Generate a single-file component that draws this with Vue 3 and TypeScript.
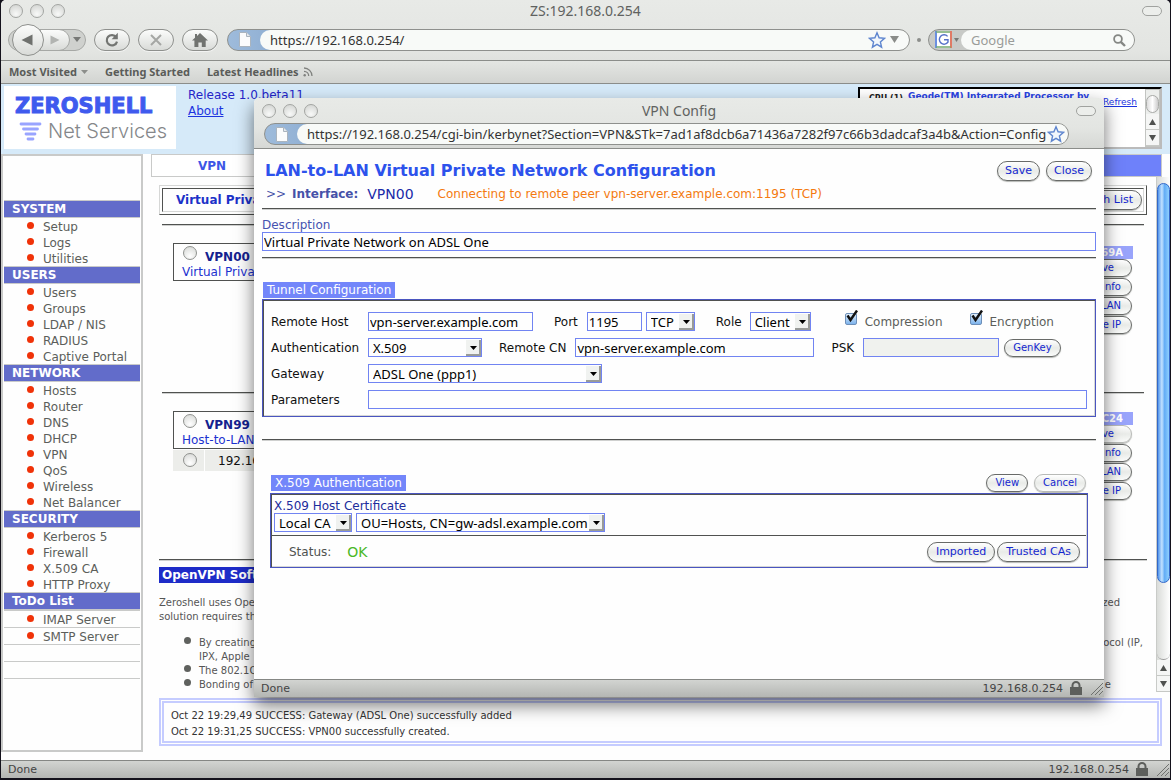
<script setup lang="ts">
import { ref } from 'vue'

interface MenuGroup {
  title: string
  items: string[]
}

const groups: MenuGroup[] = [
  { title: 'SYSTEM', items: ['Setup', 'Logs', 'Utilities'] },
  { title: 'USERS', items: ['Users', 'Groups', 'LDAP / NIS', 'RADIUS', 'Captive Portal'] },
  { title: 'NETWORK', items: ['Hosts', 'Router', 'DNS', 'DHCP', 'VPN', 'QoS', 'Wireless', 'Net Balancer'] },
  { title: 'SECURITY', items: ['Kerberos 5', 'Firewall', 'X.509 CA', 'HTTP Proxy'] },
]
const todo: string[] = ['IMAP Server', 'SMTP Server', '', '']

interface Vpn {
  name: string
  label: string
  code: string
  actions: string[]
  dimFirst: boolean
  client: string
}

const vpns: Vpn[] = [
  { name: 'VPN00', label: 'Virtual Private', code: '69A', actions: ['ve', 'nfo', 'LAN', 'e IP'], dimFirst: false, client: '' },
  { name: 'VPN99', label: 'Host-to-LAN', code: 'C24', actions: ['ve', 'nfo', 'LAN', 'e IP'], dimFirst: true, client: '192.168' },
]

const logLines: string[] = [
  'Oct 22 19:29,49 SUCCESS: Gateway (ADSL One) successfully added',
  'Oct 22 19:31,25 SUCCESS: VPN00 successfully created.',
]

const mainUrl = ref('https://192.168.0.254/')
const popupUrl = ref(
  'https://192.168.0.254/cgi-bin/kerbynet?Section=VPN&STk=7ad1af8dcb6a71436a7282f97c66b3dadcaf3a4b&Action=Config',
)
const description = ref('Virtual Private Network on ADSL One')
const remoteHost = ref('vpn-server.example.com')
const port = ref('1195')
const remoteCn = ref('vpn-server.example.com')
const parameters = ref('')
const psk = ref('')
const compression = ref(true)
const encryption = ref(true)
</script>

<template>
  <div class="desktop">
    <div class="window">
      <header class="chrome">
        <div class="titlebar">
          <div class="lights"><i></i><i></i><i></i></div>
          <span class="title">ZS:192.168.0.254</span>
          <i class="pill"></i>
        </div>
        <div class="toolbar">
          <div class="navpair">
            <button class="back" aria-label="Back">
              <svg width="12" height="12" viewBox="0 0 12 12"><path d="M11.5 0.5v11L0.5 6z" fill="#6f716e" /></svg>
            </button>
            <button class="fwd" aria-label="Forward">
              <svg width="10" height="10" viewBox="0 0 10 10"><path d="M0.5 0.5v9L9.5 5z" fill="#b2b4b1" /></svg>
            </button>
            <button class="hist" aria-label="History">
              <svg width="8" height="5" viewBox="0 0 8 5"><path d="M0 0h8L4 5z" fill="#777976" /></svg>
            </button>
          </div>
          <button class="tool" aria-label="Reload">
            <svg width="16" height="16" viewBox="0 0 16 16">
              <path d="M12.2 5.2A5.2 5.2 0 1 0 13 9.6" fill="none" stroke="#737572" stroke-width="2.2" />
              <path d="M13.8 0.8v6.4H7.6z" fill="#737572" />
            </svg>
          </button>
          <button class="tool" aria-label="Stop">
            <svg width="14" height="14" viewBox="0 0 14 14"><path d="M2 2l10 10M12 2L2 12" stroke="#a5a7a4" stroke-width="2" /></svg>
          </button>
          <button class="tool" aria-label="Home">
            <svg width="16" height="14" viewBox="0 0 16 14">
              <path d="M8 0l8 7.6h-2.3V14H9.8V9.5H6.4V14H2.4V7.6H0L3 4.7V1h2v1.9z" fill="#717370" />
            </svg>
          </button>
          <div class="address main-address">
            <span class="favicon">
              <svg width="12" height="15" viewBox="0 0 12 15">
                <path d="M0.5 0.5h7l4 4v10h-11z" fill="#fbfcfd" stroke="#aab4be" />
                <path d="M7.5 0.5v4h4" fill="#e2e8ee" stroke="#aab4be" />
              </svg>
            </span>
            <input v-model="mainUrl" aria-label="Address" />
            <svg class="star" width="18" height="17" viewBox="0 0 18 17">
              <path d="M9 1.3l2.1 5 5.4.5-4.1 3.6 1.2 5.3L9 12.9l-4.6 2.8 1.2-5.3L1.5 6.8l5.4-.5z" fill="#f2f7fc" stroke="#5f86cf" stroke-width="1.4" />
            </svg>
            <svg class="drop" width="9" height="7" viewBox="0 0 9 7"><path d="M0 0h9L4.5 7z" fill="#8a8c89" /></svg>
          </div>
          <i class="splitter"></i>
          <div class="search">
            <span class="engine">
              <svg width="17" height="17" viewBox="0 0 17 17">
                <path d="M1 0v17" stroke="#6b8fe0" stroke-width="2" /><path d="M1 1h15" stroke="#68b35e" />
                <path d="M16 0v17" stroke="#e07a66" stroke-width="2" /><path d="M1 16h15" stroke="#68b35e" />
                <rect x="2" y="2" width="13" height="13" fill="#fff" />
                <path d="M12.6 5.4A4.7 4.7 0 1 0 13 11V8.8H9" fill="none" stroke="#5570c8" stroke-width="1.4" />
              </svg>
              <svg width="5" height="4" viewBox="0 0 5 4"><path d="M0 0h5L2.5 4z" fill="#777976" /></svg>
            </span>
            <input placeholder="Google" aria-label="Search" />
            <svg class="glass" width="13" height="13" viewBox="0 0 13 13">
              <circle cx="5" cy="5" r="3.9" fill="none" stroke="#858784" stroke-width="1.8" />
              <path d="M7.8 7.8L12 12" stroke="#858784" stroke-width="2.4" />
            </svg>
          </div>
        </div>
        <nav class="bookmarks">
          <a href="#">Most Visited
            <svg width="7" height="5" viewBox="0 0 7 5"><path d="M0 0h7L3.5 4z" fill="#8c8e8b" /></svg>
          </a>
          <a href="#">Getting Started</a>
          <a href="#">Latest Headlines
            <svg width="10" height="10" viewBox="0 0 10 10">
              <g fill="none" stroke="#7f817e" stroke-width="1.3"><path d="M1 1a8 8 0 0 1 8 8" /><path d="M1 4.3a4.7 4.7 0 0 1 4.7 4.7" /></g>
              <circle cx="1.7" cy="8.3" r="1.2" fill="#7f817e" />
            </svg>
          </a>
        </nav>
      </header>

      <section class="banner">
        <div class="logo">
          <strong>ZEROSHELL</strong>
          <div class="logo-sub">
            <svg width="23" height="20" viewBox="0 0 23 20">
              <g stroke="#99a4ff" stroke-width="2.8" stroke-linecap="round"><path d="M2 3h19M4.5 8h14M7 13h9M9 18h5" /></g>
            </svg>
            <span>Net Services</span>
          </div>
        </div>
        <div class="release">
          <span>Release 1.0.beta11</span>
          <a href="#">About</a>
        </div>
        <div class="sysinfo">
          <b class="cpu">CPU (1)</b>
          <b class="model">Geode(TM) Integrated Processor by</b>
          <a href="#">Refresh</a>
          <div class="miniscroll">
            <i class="nub"></i>
            <button aria-label="Up"><svg width="7" height="6" viewBox="0 0 7 6"><path d="M3.5 0L7 6H0z" fill="#4f514f" /></svg></button>
            <button aria-label="Down"><svg width="7" height="6" viewBox="0 0 7 6"><path d="M0 0h7L3.5 6z" fill="#4f514f" /></svg></button>
          </div>
        </div>
      </section>

      <div class="body">
        <nav class="sidebar">
          <div class="spacer"></div>
          <template v-for="g in groups" :key="g.title">
            <h2>{{ g.title }}</h2>
            <ul>
              <li v-for="i in g.items" :key="i"><a href="#">{{ i }}</a></li>
            </ul>
          </template>
          <h2>ToDo List</h2>
          <ul class="ruled">
            <li v-for="(t, n) in todo" :key="n" :class="{ blank: !t }"><a v-if="t" href="#">{{ t }}</a></li>
          </ul>
        </nav>

        <main class="main">
          <div class="tabs"><a href="#">VPN</a></div>
          <div class="scroller">
            <div class="frame">
              <div class="listhead">
                <div>
                  <b>Virtual Priva</b>
                  <button class="btn tall">h List</button>
                </div>
              </div>
              <template v-for="v in vpns" :key="v.name">
                <hr class="inner" />
                <section class="vpn">
                  <div class="vpn-left">
                    <div class="vpn-card">
                      <label><input type="radio" name="vpn" /><b>{{ v.name }}</b></label>
                      <span>{{ v.label }}</span>
                    </div>
                    <div v-if="v.client" class="client">
                      <span><input type="radio" name="vpn" :aria-label="v.client" /></span><span>{{ v.client }}</span>
                    </div>
                  </div>
                  <div class="vpn-right">
                    <b>{{ v.code }}</b>
                    <button v-for="(a, n) in v.actions" :key="a" class="btn" :class="{ dim: v.dimFirst && n === 0, short: n === 0 }">{{ a }}</button>
                  </div>
                </section>
              </template>
              <hr />
              <h3>OpenVPN Soft</h3>
              <div class="prose">
                <p class="ends"><span>Zeroshell uses Open</span><span class="r1">zed</span></p>
                <p>solution requires the</p>
                <ul>
                  <li><span class="ends"><span>By creating</span><span class="r0">ocol (IP,</span></span>IPX, Apple</li>
                  <li>The 802.1Q</li>
                  <li><span class="ends"><span>Bonding of</span><span class="r2">e</span></span></li>
                </ul>
              </div>
            </div>
            <div class="scrollbar">
              <div class="track"><div class="thumb"></div></div>
              <button aria-label="Scroll up"><svg width="7" height="6" viewBox="0 0 7 6"><path d="M3.5 0L7 6H0z" fill="#4f514f" /></svg></button>
              <button aria-label="Scroll down"><svg width="7" height="6" viewBox="0 0 7 6"><path d="M0 0h7L3.5 6z" fill="#4f514f" /></svg></button>
            </div>
          </div>
          <div class="log"><div v-for="l in logLines" :key="l">{{ l }}</div></div>
        </main>
      </div>

      <footer class="status">
        <span>Done</span>
        <span class="host">192.168.0.254</span>
        <svg class="lock" width="12" height="14" viewBox="0 0 12 14">
          <rect y="6" width="12" height="8" fill="#5d5f5c" /><path d="M2.5 6.5V4.5a3.5 3.5 0 0 1 7 0v2" fill="none" stroke="#5d5f5c" stroke-width="2" />
        </svg>
        <svg class="grip" width="12" height="12" viewBox="0 0 12 12"><path d="M0 12L12 0M4 12l8-8M8 12l4-4" stroke="#6f716e" /></svg>
      </footer>
    </div>

    <div class="popup" role="dialog" aria-label="VPN Config">
      <header class="chrome">
        <div class="titlebar">
          <div class="lights"><i></i><i></i><i></i></div>
          <span class="title">VPN Config</span>
          <i class="pill"></i>
        </div>
        <div class="address">
          <span class="favicon">
            <svg width="12" height="15" viewBox="0 0 12 15">
              <path d="M0.5 0.5h7l4 4v10h-11z" fill="#fbfcfd" stroke="#aab4be" />
              <path d="M7.5 0.5v4h4" fill="#e2e8ee" stroke="#aab4be" />
            </svg>
          </span>
          <input v-model="popupUrl" aria-label="Popup address" />
          <svg class="star" width="18" height="17" viewBox="0 0 18 17">
            <path d="M9 1.3l2.1 5 5.4.5-4.1 3.6 1.2 5.3L9 12.9l-4.6 2.8 1.2-5.3L1.5 6.8l5.4-.5z" fill="#f2f7fc" stroke="#5f86cf" stroke-width="1.4" />
          </svg>
        </div>
      </header>

      <form class="config" @submit.prevent>
        <div class="heading">
          <h1>LAN-to-LAN Virtual Private Network Configuration</h1>
          <button class="btn tall">Save</button>
          <button class="btn tall">Close</button>
        </div>
        <div class="iface">
          <span>&gt;&gt;</span><b>Interface:</b><em>VPN00</em>
          <span class="state">Connecting to remote peer vpn-server.example.com:1195 (TCP)</span>
        </div>
        <hr />
        <div class="desc">
          <label for="desc">Description</label>
          <input id="desc" v-model="description" />
        </div>
        <hr />

        <h2 class="badge">Tunnel Configuration</h2>
        <div class="panel tunnel">
          <div class="row">
            <label for="rhost">Remote Host</label>
            <input id="rhost" v-model="remoteHost" class="w-host" />
            <label for="port" class="l-port">Port</label>
            <input id="port" v-model="port" class="w-port" />
            <span class="sel w-proto"><select aria-label="Protocol"><option>TCP</option></select>
              <i><svg width="7" height="4" viewBox="0 0 7 4"><path d="M0 0h7L3.5 4z" /></svg></i></span>
            <label for="role" class="l-role">Role</label>
            <span class="sel w-role"><select id="role"><option>Client</option></select>
              <i><svg width="7" height="4" viewBox="0 0 7 4"><path d="M0 0h7L3.5 4z" /></svg></i></span>
            <label class="check first"><span><input v-model="compression" type="checkbox" />
              <svg v-if="compression" width="13" height="13" viewBox="0 0 13 13"><path d="M2.5 5.5l3 4.5L12 0.5" fill="none" stroke="#111" stroke-width="2.4" /></svg></span>Compression</label>
            <label class="check"><span><input v-model="encryption" type="checkbox" />
              <svg v-if="encryption" width="13" height="13" viewBox="0 0 13 13"><path d="M2.5 5.5l3 4.5L12 0.5" fill="none" stroke="#111" stroke-width="2.4" /></svg></span>Encryption</label>
          </div>
          <div class="row">
            <label for="auth">Authentication</label>
            <span class="sel w-auth"><select id="auth"><option>X.509</option></select>
              <i><svg width="7" height="4" viewBox="0 0 7 4"><path d="M0 0h7L3.5 4z" /></svg></i></span>
            <label for="rcn" class="l-cn">Remote CN</label>
            <input id="rcn" v-model="remoteCn" class="w-cn" />
            <label for="psk" class="l-psk">PSK</label>
            <input id="psk" v-model="psk" class="w-psk" disabled />
            <button class="btn genkey">GenKey</button>
          </div>
          <div class="row">
            <label for="gw">Gateway</label>
            <span class="sel w-gw"><select id="gw"><option>ADSL One (ppp1)</option></select>
              <i><svg width="7" height="4" viewBox="0 0 7 4"><path d="M0 0h7L3.5 4z" /></svg></i></span>
          </div>
          <div class="row">
            <label for="params">Parameters</label>
            <input id="params" v-model="parameters" class="grow" />
          </div>
        </div>
        <hr class="after-tunnel" />

        <div class="x509">
          <div class="x509-head">
            <h2 class="badge">X.509 Authentication</h2>
            <button class="btn">View</button>
            <button class="btn dim">Cancel</button>
          </div>
          <div class="panel">
            <div class="cert">
              <label for="cert">X.509 Host Certificate</label>
              <div class="cert-row">
                <span class="sel w-ca"><select aria-label="Authority"><option>Local CA</option></select>
                  <i><svg width="7" height="4" viewBox="0 0 7 4"><path d="M0 0h7L3.5 4z" /></svg></i></span>
                <span class="sel w-cert"><select id="cert"><option>OU=Hosts, CN=gw-adsl.example.com</option></select>
                  <i><svg width="7" height="4" viewBox="0 0 7 4"><path d="M0 0h7L3.5 4z" /></svg></i></span>
              </div>
            </div>
            <div class="state-row">
              <span>Status:</span><strong>OK</strong>
              <button class="btn tall">Imported</button>
              <button class="btn tall">Trusted CAs</button>
            </div>
          </div>
        </div>
      </form>

      <footer class="status">
        <span>Done</span>
        <span class="host">192.168.0.254</span>
        <svg class="lock" width="12" height="14" viewBox="0 0 12 14">
          <rect y="6" width="12" height="8" fill="#5d5f5c" /><path d="M2.5 6.5V4.5a3.5 3.5 0 0 1 7 0v2" fill="none" stroke="#5d5f5c" stroke-width="2" />
        </svg>
        <svg class="grip" width="12" height="12" viewBox="0 0 12 12"><path d="M0 12L12 0M4 12l8-8M8 12l4-4" stroke="#6f716e" /></svg>
      </footer>
    </div>
  </div>
</template>

<style>
html, body { background: #000; }
</style>

<style scoped>
* { box-sizing: border-box; }
.desktop {
  position: relative;
  display: flex;
  min-height: 100vh;
  padding: 0 1px 2px;
  overflow: hidden;
  background: #14121c;
  font: 12px/16px "DejaVu Sans", Verdana, sans-serif;
  color: #222;
}
button, input, select { font: inherit; margin: 0; }
input, select { font: 13px/16px "Noto Sans", "Lucida Grande", sans-serif; }
h1, h2, h3, ul, p { margin: 0; padding: 0; }
svg { display: block; flex: none; }
.window {
  flex: 1;
  min-width: 0;
  display: flex;
  flex-direction: column;
  background: #fefefe;
  border-radius: 5px 5px 0 0;
  overflow: hidden;
}

/* browser chrome */
.chrome { background: linear-gradient(#e8eae7, #e3e5e2 60%, #d6d8d5); }
.titlebar { display: grid; grid-template-columns: 1fr auto 1fr; align-items: center; height: 22px; padding: 0 8px; }
.lights { display: flex; gap: 7px; }
.lights i {
  width: 14px;
  height: 14px;
  border: 1px solid #a3a5a2;
  border-radius: 50%;
  background: radial-gradient(circle at 50% 75%, #f8f9f8, #cfd1ce);
}
.title { color: #606260; font: 14px/16px "Noto Sans", "Lucida Grande", sans-serif; }
.pill {
  justify-self: end;
  width: 20px;
  height: 10px;
  border: 1px solid #a0a29f;
  border-radius: 5px;
  background: #eceeeb;
}
.toolbar {
  display: flex;
  align-items: center;
  height: 39px;
  padding: 0 35px 3px 7px;
  border-bottom: 1px solid #8b8d8a;
}
.toolbar button {
  display: flex;
  align-items: center;
  justify-content: center;
  padding: 0;
  border: 1px solid #8e908d;
  background: linear-gradient(#fbfcfb, #d9dbd8);
}
.navpair {
  display: flex;
  align-items: center;
  width: 78px;
  height: 22px;
  border: 1px solid #a6a8a5;
  border-radius: 11px;
  background: #cfd1ce;
}
.toolbar .back { width: 32px; height: 32px; margin-left: 3px; padding-right: 3px; border-radius: 50%; z-index: 1; flex: none; }
.toolbar .fwd { width: 30px; height: 22px; margin-left: -4px; border-radius: 0 11px 11px 0; flex: none; border-color: #a6a8a5; }
.toolbar .hist { width: 14px; border: 0; background: none; }
.toolbar .tool { width: 36px; height: 22px; margin-left: 8px; border-radius: 11px; box-shadow: 0 1px 0 #f2f3f2; }
.address {
  display: flex;
  align-items: center;
  height: 22px;
  border: 1px solid #8e908d;
  border-radius: 11px;
  overflow: hidden;
  background: linear-gradient(90deg, #9ebbdb, #8babd0 60px, #f8faf8 70px);
}
.favicon { width: 32px; padding: 0 0 0 11px; flex: none; }
.address input {
  flex: 1;
  min-width: 0;
  height: 20px;
  padding: 0 0 0 10px;
  border: 0;
  border-radius: 10px 0 0 10px;
  background: #f8faf8;
  color: #333;
  outline: none;
}
.star { background: #f8faf8; height: 20px; padding: 1px 0; }
.main-address { flex: 1; margin-left: 9px; }
.drop { margin: 0 10px 0 4px; }
.splitter { width: 4px; height: 4px; margin: 0 7px; border-radius: 2px; background: #8c8e8b; }
.search {
  display: flex;
  align-items: center;
  width: 207px;
  height: 22px;
  border: 1px solid #8e908d;
  border-radius: 11px;
  overflow: hidden;
  background: #c8cac7;
}
.engine { display: flex; align-items: center; gap: 2px; width: 32px; padding-left: 6px; flex: none; }
.search input {
  flex: 1;
  min-width: 0;
  height: 20px;
  padding: 0 0 0 10px;
  border: 0;
  border-radius: 10px 0 0 10px;
  background: #f8faf8;
}
.search input::placeholder { color: #9a9c99; }
.glass { height: 20px; width: 28px; padding: 4px 8px 3px 7px; background: #f8faf8; }
.bookmarks {
  display: flex;
  align-items: center;
  gap: 17px;
  height: 23px;
  padding-left: 8px;
  border-bottom: 1px solid #8b8d8a;
  background: linear-gradient(#e4e6e3, #d2d4d1);
  font: bold 11px/16px "Noto Sans", "Lucida Grande", sans-serif;
}
.bookmarks a { display: flex; align-items: center; gap: 4px; color: #5a5c59; text-decoration: none; }

/* banner */
.banner { display: flex; height: 70px; padding: 2px 8px 0 3px; background: #d6eaf9; }
.logo { width: 172px; height: 63px; padding: 8px 0 0 11px; background: #fff; flex: none; }
.logo strong { display: block; font-size: 21px; line-height: 24px; color: #3f5aee; -webkit-text-stroke: 1px #3f5aee; }
.logo-sub { display: flex; align-items: center; gap: 6px; padding-left: 4px; font: 20px/26px Inter, sans-serif; font-weight: 300; color: #85878a; }
.release { display: flex; flex-direction: column; align-items: flex-start; margin-left: 12px; padding-top: 1px; color: #2424c8; }
.release a, .sysinfo a { color: #1c34e0; }
.sysinfo {
  display: flex;
  align-items: flex-start;
  width: 304px;
  height: 62px;
  margin: 1px 0 0 auto;
  padding-left: 9px;
  border: 2px solid;
  border-color: #000 #bbb #bbb #000;
  background: #fff;
  font-size: 10px;
  line-height: 14px;
}
.cpu { width: 39px; font-size: 8px; line-height: 20px; flex: none; }
.model { width: 195px; color: #2b44e4; font-size: 9px; flex: none; white-space: nowrap; }
.sysinfo a { font-size: 9px; padding-top: 6px; }
.miniscroll { display: flex; flex-direction: column; width: 15px; height: 58px; margin-left: auto; background: #eceeec; border: 1px solid #c2c4c1; }
.nub { height: 20px; margin: 5px 0 1px; border-radius: 8px; border: 1px solid #a9aba8; background: linear-gradient(90deg, #ddd, #fff, #ccc); }
.miniscroll button, .scrollbar button { display: flex; align-items: center; justify-content: center; flex: none; width: 100%; height: 16px; padding: 0; border: 0; border-bottom: 1px solid #c6c8c5; background: #f5f6f5; }

/* sidebar */
.body { flex: 1; display: grid; grid-template-columns: 142px minmax(0, 1fr); column-gap: 8px; padding-bottom: 8px; }
.sidebar { border: 2px solid #c9cac9; background: #fefefe; color: #5c5e5b; padding: 0 1px; }
.spacer { height: 44px; }
.sidebar h2 {
  height: 18px;
  padding-left: 8px;
  border: solid #c9cac9;
  border-width: 1px 0;
  background: #626cca;
  color: #fff;
  font-size: 12px;
  line-height: 17px;
}
.sidebar ul { list-style: none; }
.sidebar li { display: flex; align-items: center; height: 16px; padding: 2px 0 0 23px; }
.sidebar li::before { content: ""; width: 7px; height: 7px; margin: -4px 9px 0 0; border-radius: 50%; background: #f03208; }
.sidebar a { color: inherit; text-decoration: none; }
.sidebar .ruled { border-top: 1px solid #c9cac9; }
.sidebar .ruled li { height: 17px; border-bottom: 1px solid #c9cac9; }
.sidebar .blank::before { display: none; }

/* content behind the popup */
.main { display: flex; flex-direction: column; min-width: 0; }
.tabs { display: flex; height: 23px; margin-right: 8px; border: 1px solid #c9cac9; background: #6e81fa; }
.tabs a { width: 120px; background: #fff; color: #3c56e6; font-weight: bold; line-height: 23px; text-align: center; text-decoration: none; }
.scroller { flex: 1; display: flex; }
.frame { flex: 1; min-width: 0; padding: 8px 9px 0 8px; }
hr { height: 2px; margin: 0; border: 0; border-top: 1px solid #505250; border-bottom: 1px solid #cfd0cf; }
.listhead { padding: 2px; height: 30px; border: 1px solid; border-color: #d6d7d6 #505250 #505250 #d6d7d6; }
.listhead > div { display: flex; align-items: center; justify-content: space-between; height: 24px; padding: 0 1px 0 13px; border: 1px solid; border-color: #505250 #d6d7d6 #d6d7d6 #505250; }
.listhead b { color: #1c32c8; }
hr.inner { margin: 0 3px; }
.listhead + hr { margin-top: 9px; }
.vpn { display: flex; justify-content: space-between; height: 166px; padding: 17px 14px 0; }
.vpn:last-of-type { height: 165px; }
.vpn-left { width: 200px; }
.vpn-card { height: 38px; padding: 2px 8px; border: 1px solid #505250; color: #1c32d0; }
.vpn-card span { display: block; line-height: 17px; }
.vpn-card label { display: flex; gap: 8px; height: 18px; padding-left: 1px; line-height: 22px; color: #14228f; }
.vpn input[type="radio"] { appearance: none; width: 14px; height: 14px; border: 1px solid #8f918e; border-radius: 50%; background: radial-gradient(circle at 50% 75%, #fff, #d4d6d3); flex: none; }
.client { display: flex; gap: 1px; margin-top: 1px; color: #111; }
.client span { height: 21px; background: #ecedea; line-height: 23px; padding-left: 13px; flex: 1; }
.client span:first-child { flex: none; width: 31px; padding: 3px 10px; line-height: 16px; }
.vpn-right { display: flex; flex-direction: column; align-items: flex-end; width: 76px; padding-top: 3px; }
.vpn:last-of-type .vpn-right { padding-top: 1px; }
.vpn-right b { width: 76px; height: 13px; padding-right: 10px; background: #99a4fb; color: #fff; font-size: 10px; line-height: 14px; text-align: right; }
.vpn-right .btn { width: 74px; margin-right: 1px; margin-bottom: 1px; padding-right: 10px; height: 18px; text-align: right; flex: none; }
.vpn-right .short { padding-right: 17px; }
h3 { width: 120px; height: 16px; margin-top: 6px; padding-left: 3px; background: #1e2cc8; color: #fff; font-size: 12px; line-height: 16px; white-space: nowrap; }
.prose { margin-top: 13px; font-size: 10px; line-height: 14px; color: #555; }
.prose ul { margin-top: 12px; padding-left: 40px; list-style: none; }
.prose li { position: relative; }
.prose li::before { content: ""; position: absolute; left: -15px; top: 1px; width: 7px; height: 7px; border-radius: 50%; background: #5f615e; }
.ends { display: flex; justify-content: space-between; }
.ends .r0 { padding-right: 4px; }
.ends .r1 { padding-right: 27px; }
.ends .r2 { padding-right: 36px; }
.ends span { white-space: nowrap; }
.scrollbar { width: 14px; display: flex; flex-direction: column; border-left: 1px solid #c9cbc8; background: linear-gradient(90deg, #dadcd9, #fff); }
.track { flex: 1; padding-top: 6px; border-bottom: 1px solid #999; border-radius: 0 0 7px 7px; }
.thumb { height: 400px; border: 1px solid #3468c8; border-radius: 7px; background: linear-gradient(90deg, #4f94ec, #c2e2ff 35%, #62acf5 60%, #8fd0ff); }
.log { margin: 6px 8px 6px; padding: 5px 7px 1px; border: 5px double #c5ccff; font-size: 10px; line-height: 16px; color: #333; }

/* pill buttons */
.btn {
  height: 18px;
  padding: 0 8px;
  border: 1px solid #686a68;
  border-radius: 10px;
  background: linear-gradient(#fff, #e9ebe8 50%, #fbfcfb);
  box-shadow: 0 1px 1px #b5b7b4;
  color: #1428d0;
  font-size: 10px;
  line-height: 14px;
  white-space: nowrap;
}
.btn.tall { height: 20px; font-size: 11px; line-height: 16px; }
.btn.dim { border-color: #b8bab7; }

/* popup */
.popup {
  position: absolute;
  top: 98px;
  left: 254px;
  right: 67px;
  bottom: 83px;
  display: flex;
  flex-direction: column;
  border-radius: 5px 5px 0 0;
  background: #fefefe;
  box-shadow: 0 8px 18px rgba(0, 0, 0, 0.55);
}
.popup .chrome { border-radius: 5px 5px 0 0; border-bottom: 1px solid #8b8d8a; height: 51px; }
.popup .titlebar { height: 25px; }
.popup .address { margin: 0 35px 0 10px; }
.popup .star { margin-right: 3px; }
.config { flex: 1; padding: 0 8px; }
.heading { display: flex; align-items: center; gap: 6px; height: 31px; padding: 12px 4px 0 3px; }
.heading h1 { flex: 1; color: #2d52ec; font-size: 16px; line-height: 20px; }
.heading .btn { padding: 0 7px; }
.iface { display: flex; align-items: center; gap: 6px; height: 28px; padding-left: 4px; color: #4652a8; }
.iface em { margin-left: 3px; color: #1a2aa8; font-size: 14px; font-style: normal; }
.iface .state { margin-left: 18px; color: #f47a10; }
.desc { padding: 7px 0 6px; }
.desc label { display: block; height: 15px; color: #4652b0; line-height: 16px; }
.config input, .config select { height: 19px; padding: 0 1px; border: 1px solid #7184f2; border-radius: 0; background: #fefefe; color: #000; outline: none; }
.desc input { display: block; width: 100%; }
.config input:disabled { background: #f0f2ee; }
.badge { width: max-content; height: 16px; padding: 0 4px; background: #7386fa; color: #fff; font-size: 12px; font-weight: normal; line-height: 17px; }
hr + .badge { margin: 23px 0 1px 1px; }
.panel { border: 1px solid #4a55c0; box-shadow: inset 1px 1px 0 #505250, inset -1px -1px 0 #d6d7d6; color: #111; }
.tunnel { display: flex; flex-direction: column; gap: 7px; padding: 12px 8px 7px; }
.row { display: flex; align-items: center; height: 19px; }
.row > label:first-child { width: 97px; flex: none; }
.sel { position: relative; display: block; flex: none; }
.config .sel select { appearance: none; display: block; width: 100%; padding-left: 4px; }
.sel i { position: absolute; top: 2px; right: 1px; width: 15px; height: 16px; padding: 6px 4px; pointer-events: none; background: #f0f2f0; border: solid #999b98; border-width: 0 2px 2px 0; }
.w-host { width: 165px; }
.l-port { margin: 0 9px 0 21px; }
.w-port { width: 55px; margin-right: 4px; }
.w-proto { width: 49px; }
.l-role { margin: 0 8px 0 21px; }
.w-role { width: 61px; }
.check { display: flex; align-items: center; margin-left: 27px; color: #5c5e5b; }
.check.first { margin-left: 34px; }
.check span { position: relative; margin: -5px 8px 0 0; }
.config .check input { appearance: none; display: block; width: 12px; height: 12px; padding: 0; border: 1px solid #6d8fb8; border-radius: 2px; background: linear-gradient(#e2effb, #7db3ec); }
.check svg { position: absolute; left: 0; top: -3px; }
.w-auth { width: 114px; }
.l-cn { margin: 0 9px 0 17px; }
.w-cn { width: 239px; }
.l-psk { margin: 0 9px 0 17px; }
.w-psk { width: 136px; }
.genkey { margin-left: 5px; }
.w-gw { width: 234px; }
.grow { flex: 1; }
.after-tunnel { margin-top: 22px; }
.x509 { margin: 32px 8px 0; }
.x509-head { display: flex; align-items: center; gap: 6px; height: 20px; padding: 0 2px 0 1px; }
.x509-head .badge { margin-right: auto; }
.cert { padding: 5px 3px 2px; height: 41px; }
.cert label { display: block; height: 14px; line-height: 15px; color: #1c2c9c; }
.cert-row { display: flex; gap: 4px; }
.w-ca { width: 78px; }
.w-cert { width: 249px; }
.state-row { display: flex; align-items: center; gap: 2px; height: 32px; margin: 0 1px; padding: 0 6px 0 17px; border-top: 1px solid #505250; color: #505250; }
.state-row strong { margin: 0 auto 0 14px; color: #4ab828; font-size: 14px; font-weight: normal; }

/* status bars */
.status { display: flex; align-items: center; height: 18px; padding: 0 1px 0 7px; border-top: 1px solid #858784; background: linear-gradient(#d2d4d1, #b4b6b3); font-size: 11px; line-height: 17px; color: #444; }
.host { margin-left: auto; }
.lock { margin: 0 9px 2px 7px; }
.popup .status { flex: none; }
</style>
